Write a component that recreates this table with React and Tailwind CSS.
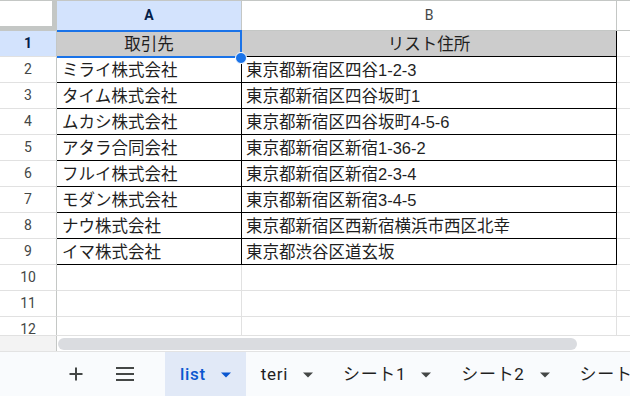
import React from "react";

const cellFont = { fontFamily: '"Liberation Sans", "Noto Sans CJK JP", sans-serif' };
const uiFont = { fontFamily: 'Roboto, "Noto Sans CJK JP", sans-serif' };

const data = [
  ["取引先", "リスト住所"],
  ["ミライ株式会社", "東京都新宿区四谷1-2-3"],
  ["タイム株式会社", "東京都新宿区四谷坂町1"],
  ["ムカシ株式会社", "東京都新宿区四谷坂町4-5-6"],
  ["アタラ合同会社", "東京都新宿区新宿1-36-2"],
  ["フルイ株式会社", "東京都新宿区新宿2-3-4"],
  ["モダン株式会社", "東京都新宿区新宿3-4-5"],
  ["ナウ株式会社", "東京都新宿区西新宿横浜市西区北幸"],
  ["イマ株式会社", "東京都渋谷区道玄坂"],
];

function Caret({ color }) {
  return (
    <svg width="10" height="6" viewBox="0 0 10 6" className="shrink-0">
      <path d="M0 0.5 L10 0.5 L5 5.5 Z" fill={color} />
    </svg>
  );
}

function Tab({ label, active }) {
  return (
    <div
      className={`flex h-full shrink-0 items-center gap-[15px] whitespace-nowrap px-[15px] pt-[2px] ${
        active ? "bg-[#e1e9f7]" : ""
      }`}
    >
      <span
        className={`text-[17px] tracking-[0.04em] ${
          active ? "font-medium text-[#0b57d0]" : "text-[#1f1f1f]"
        }`}
        style={uiFont}
      >
        {label}
      </span>
      <Caret color={active ? "#0b57d0" : "#444746"} />
    </div>
  );
}

function DataRow({ n, a, b }) {
  const header = n === 1;
  return (
    <div className="flex h-[26px]">
      <div
        className={`flex w-[57px] shrink-0 items-center justify-center border-r border-b border-r-[#c4c7c5] border-b-[#e1e1e1] text-[14px] ${
          header ? "bg-[#d3e3fd] font-bold text-[#041e49]" : "text-[#444746]"
        }`}
        style={uiFont}
      >
        {n}
      </div>
      <div
        className={`flex w-[185px] shrink-0 items-center whitespace-nowrap border-r border-b border-black pt-[1px] text-[16.5px] text-[#1f1f1f] ${
          header ? "justify-center bg-[#cccccc]" : "pl-[5px]"
        }`}
        style={cellFont}
      >
        {a}
      </div>
      <div
        className={`flex w-[375px] shrink-0 items-center whitespace-nowrap border-r border-b border-black pt-[1px] text-[16.5px] text-[#1f1f1f] ${
          header ? "justify-center bg-[#cccccc]" : "pl-[4px]"
        }`}
        style={cellFont}
      >
        {b}
      </div>
      <div className="flex-1 border-b border-[#e1e1e1]" />
    </div>
  );
}

function EmptyRow({ n }) {
  return (
    <div className="flex h-[26px] shrink-0">
      <div
        className="flex w-[57px] shrink-0 items-center justify-center border-r border-b border-r-[#c4c7c5] border-b-[#e1e1e1] text-[14px] text-[#444746]"
        style={uiFont}
      >
        {n}
      </div>
      <div className="w-[185px] shrink-0 border-r border-b border-[#e1e1e1]" />
      <div className="w-[375px] shrink-0 border-r border-b border-[#e1e1e1]" />
      <div className="flex-1 border-b border-[#e1e1e1]" />
    </div>
  );
}

export default function App() {
  return (
    <div className="flex h-[396px] w-[630px] flex-col overflow-hidden bg-white">
      {/* grid */}
      <div className="relative h-[335px] shrink-0 overflow-hidden">
        {/* column headers */}
        <div className="flex h-[31px] border-t border-[#c4c7c5]">
          <div className="w-[57px] shrink-0 border-r-[5px] border-b-[5px] border-[#c4c7c5] bg-white" />
          <div
            className="flex w-[185px] shrink-0 items-center justify-center border-r border-b border-[#c4c7c5] bg-[#d3e3fd] text-[14px] font-bold text-[#041e49]"
            style={uiFont}
          >
            A
          </div>
          <div
            className="flex w-[375px] shrink-0 items-center justify-center border-r border-b border-[#c4c7c5] text-[14px] text-[#444746]"
            style={uiFont}
          >
            B
          </div>
          <div className="flex-1 border-b border-[#c4c7c5]" />
        </div>

        {data.map((r, i) => (
          <DataRow key={i} n={i + 1} a={r[0]} b={r[1]} />
        ))}
        <EmptyRow n={10} />
        <EmptyRow n={11} />
        <EmptyRow n={12} />

        {/* active cell outline and fill handle */}
        <div className="pointer-events-none absolute left-[57px] top-[30px] h-[28px] w-[185px] border-t-2 border-r-2 border-b-2 border-[#1a73e8]" />
        <div className="absolute left-[235px] top-[52px] h-[12px] w-[12px] rounded-full border border-white bg-[#1a73e8]" />
      </div>

      {/* horizontal scrollbar */}
      <div className="flex h-[16px] shrink-0 border-t border-[#e1e1e1]">
        <div className="w-[57px] shrink-0 border-r border-[#c4c7c5] bg-[#f3f3f3]" />
        <div className="flex flex-1 items-center pl-[1px]">
          <div className="h-[12px] w-[519px] rounded-full bg-[#dadce0]" />
        </div>
      </div>

      {/* sheet tabs */}
      <div className="flex flex-1 items-center overflow-hidden border-t border-[#e3e3e3] bg-[#f9fbfd] pl-[66px]">
        <svg width="20" height="20" viewBox="0 0 20 20" className="shrink-0">
          <path d="M10 3.5 V16.5 M3.5 10 H16.5" stroke="#444746" strokeWidth="2" />
        </svg>
        <svg width="20" height="20" viewBox="0 0 20 20" className="ml-[29px] shrink-0">
          <path d="M1 4 H19 M1 10 H19 M1 16 H19" stroke="#444746" strokeWidth="2" />
        </svg>
        <div className="ml-[30px] flex h-full shrink-0">
          <Tab label="list" active />
          <Tab label="teri" />
          <Tab label="シート1" />
          <Tab label="シート2" />
          <Tab label="シート3" />
        </div>
      </div>
    </div>
  );
}
